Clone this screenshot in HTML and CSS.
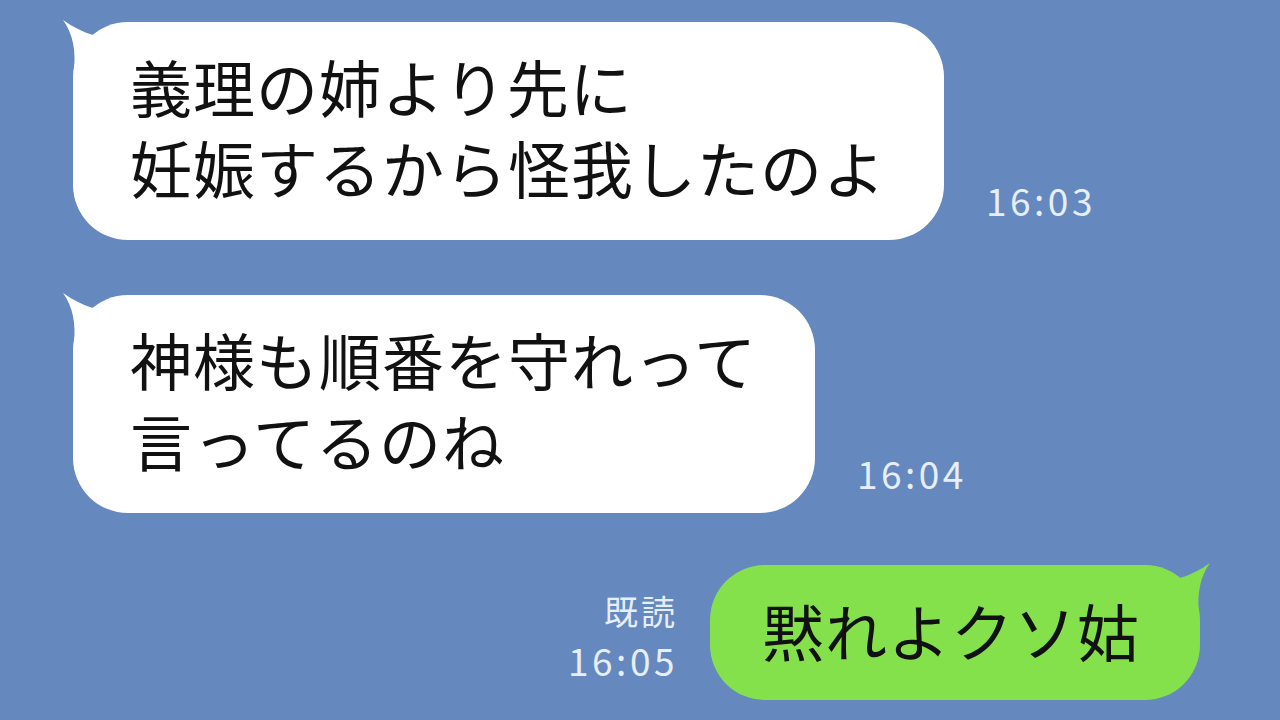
FILE: index.html
```html
<!DOCTYPE html>
<html lang="ja">
<head>
  <meta charset="UTF-8">
  <title>トーク</title>
  <link rel="stylesheet" href="styles.css">
</head>
<body>
  <div class="chat">

    <div class="row in">
      <div class="bubble white">
        <svg class="tail" viewBox="-12 -6 60 60" width="60" height="60"><path d="M-10 -2 C0 12 3 28 1 50 L40 50 L20 13 C10 10 0 5 -10 -2 Z"/></svg>
        <p>義理の姉より先に<br>妊娠するから怪我したのよ</p>
      </div>
      <div class="meta"><span class="time">16:03</span></div>
    </div>

    <div class="row in second">
      <div class="bubble white">
        <svg class="tail" viewBox="-12 -6 60 60" width="60" height="60"><path d="M-10 -2 C0 12 3 28 1 50 L40 50 L20 13 C10 10 0 5 -10 -2 Z"/></svg>
        <p>神様も順番を守れって<br>言ってるのね</p>
      </div>
      <div class="meta"><span class="time">16:04</span></div>
    </div>

    <div class="row out">
      <div class="meta">
        <span class="read">既読</span>
        <span class="time">16:05</span>
      </div>
      <div class="bubble green">
        <svg class="tail" viewBox="-12 -6 60 60" width="60" height="60"><path d="M-10 -2 C0 12 3 28 1 50 L40 50 L20 13 C10 10 0 5 -10 -2 Z"/></svg>
        <p>黙れよクソ姑</p>
      </div>
    </div>

  </div>
</body>
</html>
```

FILE: styles.css
```css
body {
  margin: 0;
  width: 1280px;
  height: 720px;
  overflow: hidden;
  background: #6588bf;
  font-family: "Noto Sans CJK JP", "Noto Sans", sans-serif;
}

.chat {
  display: flex;
  flex-direction: column;
  padding-top: 22px;
}

.row {
  display: flex;
  align-items: flex-end;
}

.row.in {
  margin-left: 73px;
  gap: 42px;
}

.row.second {
  margin-top: 55px;
}

.row.out {
  justify-content: flex-end;
  margin-right: 80px;
  margin-top: 52px;
  gap: 32px;
}

.bubble {
  position: relative;
  border-radius: 55px;
  color: #111;
}

.bubble p {
  margin: 0;
  font-size: 62px;
  line-height: 81px;
  letter-spacing: 1px;
  white-space: nowrap;
}

.white {
  background: #fff;
  padding: 24px 58px 32px 57px;
}

.white .tail {
  fill: #fff;
}

.green {
  background: #85e14b;
  padding: 25px 60px 29px 52px;
}

.green .tail {
  fill: #85e14b;
}

.tail {
  position: absolute;
  left: -12px;
  top: -6px;
}

.green .tail {
  left: auto;
  right: -12px;
  transform: scaleX(-1);
}

.meta {
  display: flex;
  flex-direction: column;
  align-items: flex-end;
  padding-bottom: 21px;
  color: #e6eef9;
}

.time {
  font-size: 37px;
  line-height: 1;
  letter-spacing: 3.5px;
}

.read {
  font-size: 34px;
  line-height: 1;
  letter-spacing: 3px;
  margin-bottom: 14px;
}
```
